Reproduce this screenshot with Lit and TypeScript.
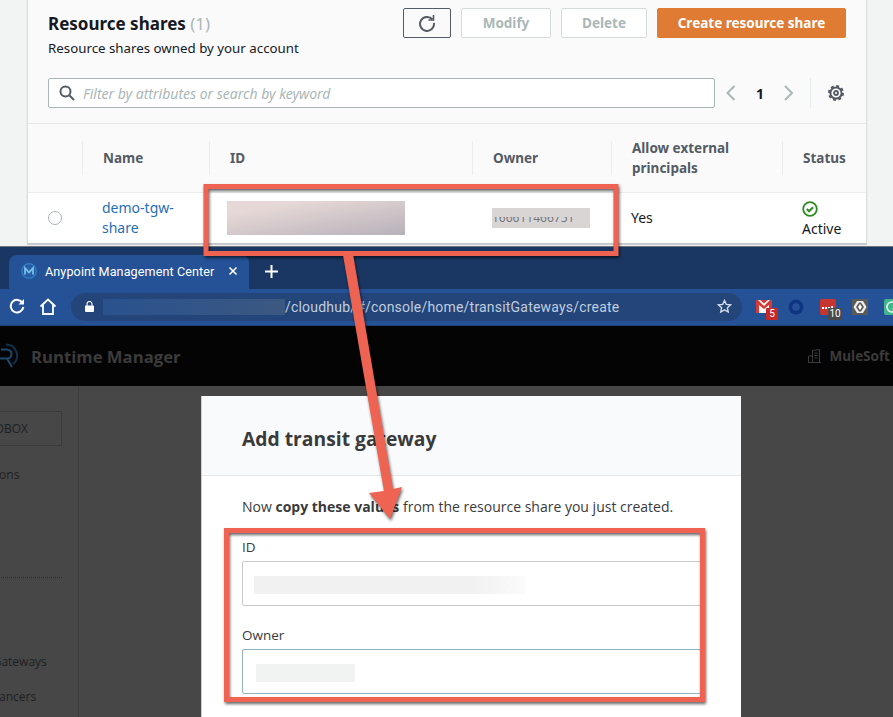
import { LitElement, html, css, svg } from "lit";
import { customElement } from "lit/decorators.js";

const COLUMNS = [
  { label: "Name" },
  { label: "ID" },
  { label: "Owner" },
  { label: "Allow external principals" },
  { label: "Status" },
];

@customElement("app-root")
export class AppRoot extends LitElement {
  static styles = css`
    :host {
      display: block;
      position: relative;
      width: 893px;
      height: 717px;
      overflow: hidden;
      background: #474747;
      font-family: "Noto Sans", "Open Sans", sans-serif;
    }

    /* aws console capture */
    .aws {
      height: 246px;
      background: #f2f3f3;
      border-bottom: 1px solid #70747a;
      box-sizing: content-box;
    }
    .panel {
      box-sizing: border-box;
      margin-left: 27px;
      width: 840px;
      height: 244px;
      background: #fafafa;
      border: 1px solid #dcdddd;
      border-top: 0;
      border-bottom: 1px solid #c4c5c6;
      box-shadow: 0 1px 1px rgba(0, 0, 0, 0.15);
    }
    .head {
      box-sizing: border-box;
      height: 124px;
      padding: 8px 20px 0;
      border-bottom: 1px solid #e6e7e7;
    }
    .head-top {
      display: flex;
      justify-content: space-between;
      height: 70px;
    }
    .title {
      font-size: 17px;
      line-height: 30px;
      font-weight: 700;
      color: #16191f;
      padding-top: 1px;
    }
    .title span {
      font-weight: 400;
      color: #aab7b8;
    }
    .subtitle {
      font-size: 13.3px;
      line-height: 19px;
      color: #16191f;
    }
    .actions {
      display: flex;
      gap: 10px;
    }
    .btn {
      box-sizing: border-box;
      height: 30px;
      display: flex;
      align-items: center;
      justify-content: center;
      font-size: 13.5px;
      font-weight: 700;
      border-radius: 2px;
      border: 1px solid #d5dbdb;
      color: #aab7b8;
      background: #fff;
    }
    .btn.refresh {
      width: 48px;
      border-color: #545b64;
      background: #fafafa;
    }
    .btn.modify {
      width: 90px;
    }
    .btn.delete {
      width: 86px;
    }
    .btn.primary {
      width: 189px;
      background: #df7b33;
      border-color: #df7b33;
      color: #fff;
    }
    .search-row {
      display: flex;
      align-items: center;
    }
    .search {
      box-sizing: border-box;
      width: 667px;
      height: 30px;
      display: flex;
      align-items: center;
      gap: 8px;
      padding-left: 10px;
      background: #fff;
      border: 1px solid #aab7b8;
      border-radius: 2px;
      font-size: 14px;
      font-style: italic;
      color: #aab7b8;
    }
    .search .hint {
      padding-top: 1px;
    }
    .pager {
      flex: 1;
      display: flex;
      align-items: center;
      font-size: 14px;
      font-weight: 700;
      color: #16191f;
    }
    .pager .page {
      width: 42px;
      text-align: center;
    }
    .pager .prev {
      margin-left: 9px;
      width: 15px;
    }
    .pager .next {
      width: 15px;
    }
    .pager .rule {
      height: 30px;
      width: 1px;
      margin-left: 14px;
      background: #eaeded;
    }
    .pager .gear {
      margin-left: 16px;
      display: flex;
    }

    .table-head,
    .table-row {
      display: grid;
      grid-template-columns: 54px 127px 263px 139px 171px 84px;
    }
    .table-head {
      box-sizing: border-box;
      height: 69px;
      align-items: center;
      border-bottom: 1px solid #eaeded;
    }
    .th {
      box-sizing: border-box;
      height: 34px;
      padding-left: 20px;
      display: flex;
      align-items: center;
      border-left: 1px solid #eaeded;
      font-size: 13.5px;
      line-height: 20px;
      font-weight: 700;
      color: #545b64;
    }
    .th.spacer {
      border-left: 0;
    }
    .table-row {
      height: 50px;
      align-items: center;
      background: #fff;
      font-size: 14px;
      color: #16191f;
      line-height: 20px;
    }
    .radio {
      width: 12px;
      height: 12px;
      margin-left: 20px;
      border: 1px solid #aab7b8;
      border-radius: 50%;
    }
    .name {
      padding-left: 20px;
      color: #1f6fb5;
      width: 90px;
    }
    .id-blur {
      margin-left: 18px;
      width: 178px;
      height: 34px;
      background: linear-gradient(170deg, #e6d8d6 20%, #b7b1ba 100%);
    }
    .owner-blur {
      position: relative;
      margin-left: 20px;
      width: 98px;
      height: 20px;
      overflow: hidden;
      background: #d9d5d5;
      color: #77757a;
      font-size: 12px;
      line-height: 20px;
      white-space: nowrap;
    }
    .owner-blur::before {
      content: "";
      position: absolute;
      left: 0;
      right: 0;
      top: 0;
      height: 9px;
      background: #d9d5d5;
    }
    .yes {
      padding-left: 20px;
    }
    .status {
      padding: 3px 0 0 20px;
    }
    .status svg {
      display: block;
      margin-bottom: 2px;
    }

    /* chrome */
    .tabs {
      box-sizing: border-box;
      height: 42px;
      padding: 8px 0 0 9px;
      background: #1a3663;
      display: flex;
      align-items: stretch;
    }
    .tab {
      box-sizing: border-box;
      width: 240px;
      display: flex;
      align-items: center;
      padding-left: 12px;
      background: #255296;
      border-radius: 8px 8px 0 0;
      color: #fff;
      font-family: Roboto, sans-serif;
      font-size: 12.6px;
      letter-spacing: 0.1px;
      padding-bottom: 2px;
    }
    .tab .label {
      margin-left: 8px;
      flex: 1;
      white-space: nowrap;
    }
    .tab .close {
      margin-right: 11px;
      display: flex;
    }
    .new-tab {
      margin: 0 0 2px 16px;
      display: flex;
      align-items: center;
    }
    .toolbar {
      box-sizing: border-box;
      height: 37px;
      display: flex;
      align-items: center;
      background: #255296;
      padding-bottom: 1px;
      border-bottom: 1px solid #1f4376;
    }
    .nav {
      display: flex;
      margin-left: 9px;
      gap: 14px;
    }
    .omnibox {
      box-sizing: border-box;
      margin-left: 14px;
      width: 671px;
      height: 28px;
      display: flex;
      align-items: center;
      padding-left: 14px;
      background: #23457a;
      border-radius: 14px;
      color: #c0cddf;
      font-family: Roboto, sans-serif;
      font-size: 14px;
      letter-spacing: 0.2px;
    }
    .url-blur {
      margin-left: 9px;
      width: 182px;
      height: 16px;
      background: linear-gradient(90deg, #2a528f, #3b5880);
      filter: blur(0.5px);
    }
    .url {
      flex: 1;
      white-space: nowrap;
    }
    .omnibox .star {
      display: flex;
      margin-right: 10px;
    }
    .exts {
      position: relative;
      flex: 1;
      height: 36px;
    }
    .ext {
      position: absolute;
    }
    .badge {
      position: absolute;
      height: 12px;
      border-radius: 1px;
      color: #fff;
      font-family: Roboto, sans-serif;
      font-size: 10px;
      line-height: 12px;
      text-align: center;
    }

    /* runtime manager */
    .app-bar {
      height: 60px;
      display: flex;
      align-items: center;
      background: #040404;
      color: #3b3b3b;
      font-weight: 700;
    }
    .app-logo {
      width: 31px;
      display: flex;
    }
    .app-name {
      flex: 1;
      font-family: "Open Sans", sans-serif;
      font-size: 16.7px;
    }
    .org {
      display: flex;
      align-items: center;
      gap: 8px;
      font-family: "Open Sans", sans-serif;
      font-size: 13.5px;
      margin-right: 3px;
    }
    .content {
      display: flex;
      height: 331px;
      overflow: hidden;
      font-family: "Open Sans", sans-serif;
    }
    .sidebar {
      box-sizing: content-box;
      width: 78px;
      flex: none;
      overflow: hidden;
      border-right: 1px solid #3c3c3c;
      color: #1f1f1f;
      font-size: 12px;
      white-space: nowrap;
    }
    .side-inner {
      margin-left: -49px;
      width: 111px;
    }
    .sandbox {
      box-sizing: border-box;
      height: 35px;
      margin-top: 25px;
      padding-left: 20px;
      border: 1px solid #3b3b3b;
      display: flex;
      align-items: center;
      font-size: 12px;
    }
    .side-link {
      line-height: 20px;
    }
    .side-link.first {
      margin-top: 19px;
    }
    .side-rule {
      margin-top: 92px;
      border-top: 1px dotted #2e2e2e;
    }
    .side-link.gateways {
      margin-top: 74px;
    }
    .side-link.balancers {
      margin-top: 15px;
    }
    .modal {
      box-sizing: border-box;
      width: 540px;
      height: 340px;
      margin: 10px 0 0 122px;
      flex: none;
      background: #fff;
      border-left: 1px solid #cfd0d2;
      color: #3a3a3c;
    }
    .modal-head {
      box-sizing: border-box;
      height: 80px;
      padding: 6px 0 0 40px;
      display: flex;
      align-items: center;
      background: #f9fafb;
      border-bottom: 1px solid #e4e6e8;
      font-size: 19.3px;
      font-weight: 700;
    }
    .modal-body {
      padding: 21px 40px 0;
      font-size: 14px;
    }
    .lead {
      line-height: 20px;
    }
    .field-label {
      line-height: 20px;
      margin-top: 20px;
      font-size: 13.5px;
    }
    .field-label.second {
      margin-top: 19px;
    }
    .input {
      box-sizing: border-box;
      height: 45px;
      margin-top: 4px;
      padding: 3px 0 0 11px;
      display: flex;
      align-items: center;
      border: 1px solid #c8c8ca;
      border-radius: 2px;
    }
    .input.focus {
      border-color: #8fb3c4;
    }
    .input i {
      display: block;
      background: linear-gradient(90deg, #f1f1f1 80%, #fbfbfb);
    }
    .input .blur-id {
      width: 272px;
      height: 18px;
    }
    .input .blur-owner {
      width: 99px;
      height: 18px;
      margin-left: 2px;
      background: #f1f2f2;
    }

    /* annotations drawn on top of the capture */
    .marks {
      position: absolute;
      left: 0;
      top: 0;
      pointer-events: none;
      filter: drop-shadow(1px 2px 1.5px rgba(0, 0, 0, 0.6));
    }
  `;

  private renderExtensions() {
    return html`<div class="exts">
      <svg class="ext" style="left:14px;top:11px" width="16" height="13" viewBox="0 0 16 13">
        <rect width="16" height="13" fill="#d63a36" />
        <path d="M2 0l6 6 6-6h-2L8 3.5 4 0z" fill="#fff" />
        <path d="M3 13V5l5 4 5-4v8z" fill="#fff" opacity=".95" />
      </svg>
      <div class="badge" style="left:24px;top:19px;width:12px;background:#c62828">5</div>
      <svg class="ext" style="left:46px;top:10px" width="16" height="16" viewBox="0 0 16 16">
        <circle cx="8" cy="8" r="5.6" fill="none" stroke="#0f3483" stroke-width="3.6" />
      </svg>
      <svg class="ext" style="left:78px;top:10px" width="16" height="16" viewBox="0 0 16 16">
        <rect width="16" height="16" rx="2" fill="#c8352f" />
        <path d="M2 8h2v2H2zM5 8h2v2H5zM8 8h2v2H8zM11 7h2v3h-2z" fill="#fff" />
      </svg>
      <div class="badge" style="left:86px;top:19px;width:14px;background:#4a4a4a">10</div>
      <svg class="ext" style="left:110px;top:10px" width="16" height="16" viewBox="0 0 16 16">
        <rect width="16" height="16" fill="#5a5a5a" />
        <path d="M5 2h6l3.5 6L11 14H5L1.500 8z" fill="#eee" />
        <path d="M7 3.500L4 8l3 4.500h2L12 8 9 3.500z" fill="#5a5a5a" />
        <path d="M8 5l2 3-2 3-2-3z" fill="#fff" />
      </svg>
      <svg class="ext" style="left:142px;top:10px" width="16" height="16" viewBox="0 0 16 16">
        <rect width="16" height="16" rx="2" fill="#3fb68b" />
        <path d="M12 5a5 5 0 1 0 0.500 5H8.500" fill="none" stroke="#e8f7f1" stroke-width="1.600" />
      </svg>
    </div>`;
  }

  private renderMarks() {
    const red = "#ee6352";
    return svg`<svg class="marks" width="893" height="717" viewBox="0 0 893 717">
      <rect x="206" y="186.500" width="410" height="67" fill="none" stroke=${red} stroke-width="5" />
      <rect x="226.500" y="530.500" width="476" height="169" fill="none" stroke=${red} stroke-width="5" />
      <path d="M343 255L353 254L393 489L402 487L390 519L369 493L384 491Z" fill=${red} />
    </svg>`;
  }

  render() {
    return html`
      <section class="aws">
        <div class="panel">
          <div class="head">
            <div class="head-top">
              <div>
                <div class="title">Resource shares <span>(1)</span></div>
                <div class="subtitle">Resource shares owned by your account</div>
              </div>
              <div class="actions">
                <div class="btn refresh">
                  <svg width="18" height="18" viewBox="0 0 18 18" fill="none" stroke="#545b64" stroke-width="2">
                    <path d="M14.500 5.500A7 7 0 1 0 16 9" />
                    <path d="M15.500 1v5h-5" stroke-width="1.600" />
                  </svg>
                </div>
                <div class="btn modify">Modify</div>
                <div class="btn delete">Delete</div>
                <div class="btn primary">Create resource share</div>
              </div>
            </div>
            <div class="search-row">
              <div class="search">
                <svg width="16" height="16" viewBox="0 0 16 16" fill="none" stroke="#545b64" stroke-width="2">
                  <circle cx="6.500" cy="6.500" r="5" />
                  <path d="M10.500 10.500L15 15" />
                </svg>
                <span class="hint">Filter by attributes or search by keyword</span>
              </div>
              <div class="pager">
                <svg class="prev" width="15" height="16" viewBox="0 0 15 16" fill="none" stroke="#aab7b8" stroke-width="2">
                  <path d="M10.500 1L3.500 8l7 7" />
                </svg>
                <span class="page">1</span>
                <svg class="next" width="15" height="16" viewBox="0 0 15 16" fill="none" stroke="#aab7b8" stroke-width="2">
                  <path d="M4 1l7 7-7 7" />
                </svg>
                <span class="rule"></span>
                <span class="gear">
                  <svg width="18" height="18" viewBox="0 0 18 18" fill="none" stroke="#545b64">
                    <circle cx="9" cy="9" r="5.600" stroke-width="2" />
                    <circle cx="9" cy="9" r="7" stroke-width="2" stroke-dasharray="2.900 2.600" />
                    <circle cx="9" cy="9" r="2" stroke-width="1.800" />
                  </svg>
                </span>
              </div>
            </div>
          </div>
          <div class="table-head">
            <div class="th spacer"></div>
            ${COLUMNS.map((col) => html`<div class="th">${col.label}</div>`)}
          </div>
          <div class="table-row">
            <div class="radio"></div>
            <div class="name">demo-tgw-share</div>
            <div class="id-blur"></div>
            <div class="owner-blur">166611466751</div>
            <div class="yes">Yes</div>
            <div class="status">
              <svg width="16" height="16" viewBox="0 0 16 16" fill="none" stroke="#2e8b1f" stroke-width="1.800">
                <circle cx="8" cy="8" r="6.800" />
                <path d="M4.800 8l2.300 2.300 4-4" stroke-width="2" />
              </svg>
              Active
            </div>
          </div>
        </div>
      </section>

      <section class="tabs">
        <div class="tab">
          <svg width="16" height="16" viewBox="0 0 16 16" fill="none">
            <circle cx="8" cy="8" r="7.200" stroke="#2f7fc4" stroke-width="1.400" />
            <circle cx="8" cy="8" r="5.800" fill="#2f7fc4" opacity=".35" />
            <path d="M4 11.500V5l4 4.500L12 5v6.500" stroke="#7cc4ef" stroke-width="1.700" />
          </svg>
          <span class="label">Anypoint Management Center</span>
          <span class="close">
            <svg width="10" height="10" viewBox="0 0 10 10" stroke="#fff" stroke-width="1.600">
              <path d="M1.500 1.500l7 7M8.500 1.500l-7 7" />
            </svg>
          </span>
        </div>
        <div class="new-tab">
          <svg width="13" height="13" viewBox="0 0 13 13" stroke="#fff" stroke-width="2">
            <path d="M6.500 0v13M0 6.500h13" />
          </svg>
        </div>
      </section>

      <section class="toolbar">
        <div class="nav">
          <svg width="16" height="16" viewBox="0 0 16 16" fill="none" stroke="#fff" stroke-width="2">
            <path d="M13.500 5A6.300 6.300 0 1 0 14.300 9" />
            <path d="M15 1v5.500H9.500z" fill="#fff" stroke="none" />
          </svg>
          <svg width="18" height="17" viewBox="0 0 18 17" fill="none" stroke="#fff" stroke-width="1.800">
            <path d="M1.500 8.500L9 1.500l7.500 7M4 7v9h10V7" />
          </svg>
        </div>
        <div class="omnibox">
          <svg width="9" height="11" viewBox="0 0 9 11">
            <path d="M2 5V3a2.500 2.500 0 0 1 5 0v2" fill="none" stroke="#fff" stroke-width="1.100" />
            <rect y="4.500" width="9" height="6.500" rx="1" fill="#fff" />
          </svg>
          <div class="url-blur"></div>
          <div class="url">/cloudhub/#/console/home/transitGateways/create</div>
          <span class="star">
            <svg width="15" height="15" viewBox="0 0 15 15" fill="none" stroke="#d5dde8" stroke-width="1.400">
              <path d="M7.500 1.500l1.800 3.900 4.200.5-3.100 2.900.8 4.200-3.700-2.100-3.700 2.100.8-4.200L1.500 5.900l4.200-.5z" />
            </svg>
          </span>
        </div>
        ${this.renderExtensions()}
      </section>

      <section class="app-bar">
        <div class="app-logo">
          <svg width="18" height="26" viewBox="0 0 18 26" fill="none" stroke="#12304a" stroke-width="2">
            <path d="M6 1.500A11 11 0 0 1 13 21" />
            <path d="M1 6.500h6a4.500 4.500 0 0 1 0 9H0M7 15.500l5 8.500" stroke="#1c4a6e" />
          </svg>
        </div>
        <div class="app-name">Runtime Manager</div>
        <div class="org">
          <svg width="13" height="14" viewBox="0 0 13 14" fill="none" stroke="#3b3b3b">
            <path d="M4.500 13.500V1.500l7-1v13M0.500 13.500V7h4M0 13.500h13M6.500 4h3M6.500 6.500h3M6.500 9h3" />
          </svg>
          MuleSoft
        </div>
      </section>

      <section class="content">
        <nav class="sidebar">
          <div class="side-inner">
            <div class="sandbox">SANDBOX</div>
            <div class="side-link first">Applications</div>
            <div class="side-rule"></div>
            <div class="side-link gateways">Transit Gateways</div>
            <div class="side-link balancers">Load Balancers</div>
          </div>
        </nav>
        <div class="modal">
          <div class="modal-head">Add transit gateway</div>
          <div class="modal-body">
            <div class="lead">Now <b>copy these values</b> from the resource share you just created.</div>
            <div class="field-label">ID</div>
            <div class="input"><i class="blur-id"></i></div>
            <div class="field-label second">Owner</div>
            <div class="input focus"><i class="blur-owner"></i></div>
          </div>
        </div>
      </section>

      ${this.renderMarks()}
    `;
  }
}
